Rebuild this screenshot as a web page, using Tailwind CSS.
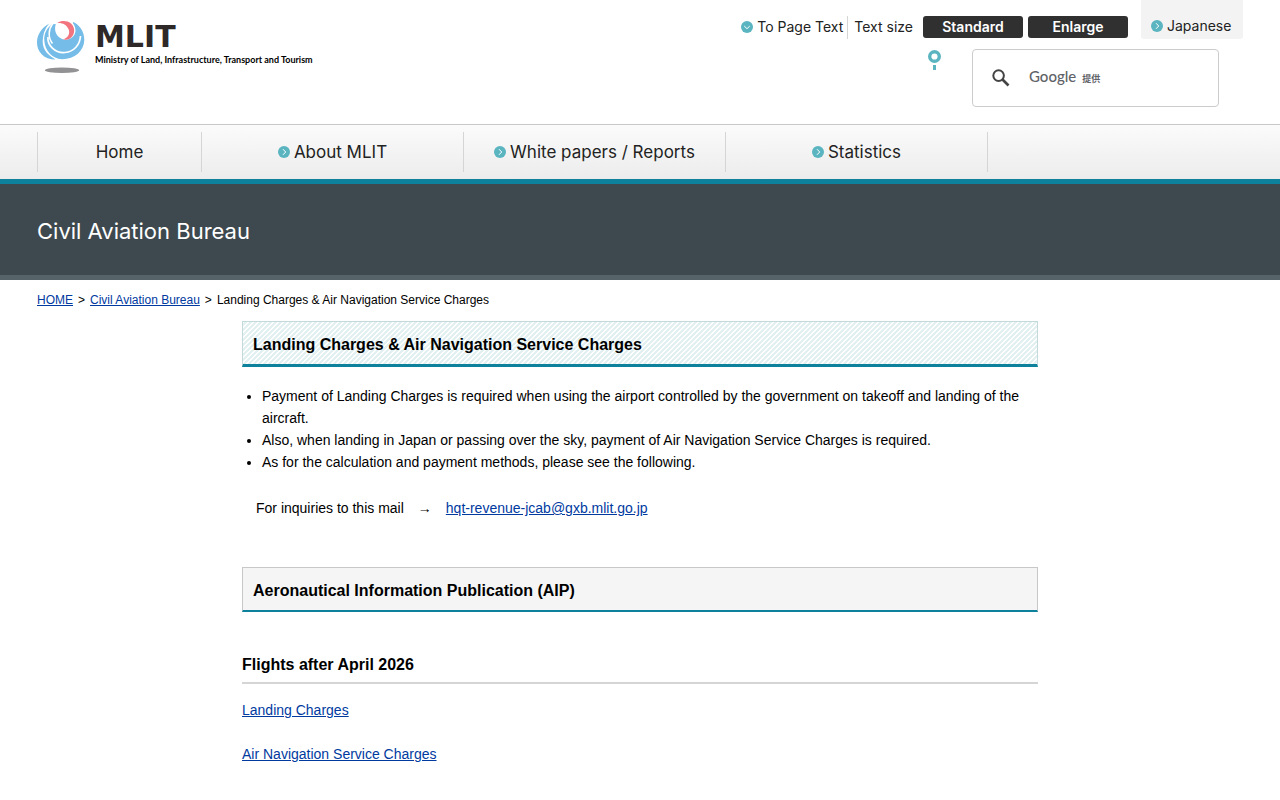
<!DOCTYPE html>
<html lang="en">
<head>
<meta charset="utf-8">
<meta name="viewport" content="width=device-width, initial-scale=1">
<title>Landing Charges &amp; Air Navigation Service Charges</title>
<script src="https://cdn.jsdelivr.net/npm/@tailwindcss/browser@4"></script>
</head>
<body class="bg-white text-black font-['Liberation_Sans','Noto_Sans_CJK_JP',sans-serif] text-sm">
<svg class="hidden" aria-hidden="true">
  <symbol id="chevron" viewBox="0 0 12 12"><circle cx="6" cy="6" r="6" fill="#5bb5c1"/><path d="M5 3.2 7.7 6 5 8.8" fill="none" stroke="#fff" stroke-width="1"/></symbol>
</svg>

<header class="flex justify-between items-start px-[37px] h-[124px]">
  <a href="#" class="flex items-start gap-2.5 pt-5" aria-label="MLIT home">
    <svg class="w-12 h-[54px]" viewBox="0 0 48 54" aria-hidden="true">
      <ellipse cx="25" cy="50.3" rx="17.2" ry="2.8" fill="#929295"/>
      <path d="M12.500 3.500C4 8 0 15 0 22.500 0 32 7 39.500 18.500 39.500 8.500 34 4.500 27 6 17.500 7 11 9 7 12.500 3.500z" fill="#75bde8"/>
      <path d="M14.500 4.500C8.500 9.500 7 15 7.300 20.500 8 31 15 38.500 25 39.300 38 39 47 31 47.300 20 47.400 11 42 4.500 36 2L34 9 18 4z" fill="#75bde8"/>
      <path d="M20 2C16.500 7 17.500 16 25 19 31 21.500 38 17.500 38.500 11 38.500 6 36 2.500 33 .8 28 0 24 0 20 2z" fill="#fff"/>
      <path d="M11 17C10 25 18 33.500 28 32.500 37 31.500 43 25 43.500 16" fill="none" stroke="#fff" stroke-width="1.700"/>
      <path d="M16 3C11 10 11 18 15.500 23.500" fill="none" stroke="#fff" stroke-width="1.500"/>
      <path d="M20.500 3C24 .3 30 .5 34 3.500 39 8 38 16 32 19 30 20 28 20 26 19.300 31 18 33.500 13.500 31.500 9 29.500 4.500 25 2.500 20.500 3z" fill="#f1747e"/>
    </svg>
    <span class="flex flex-col">
      <span class="font-['DejaVu_Sans',sans-serif] font-bold text-[30px] leading-[34px] text-[#2e2928]">MLIT</span>
      <span class="font-['Lato',sans-serif] font-bold text-[9px] leading-3">Ministry of Land, Infrastructure, Transport and Tourism</span>
    </span>
  </a>

  <div class="flex flex-col">
    <div class="flex items-start font-['Inter',sans-serif] text-sm leading-[22px] text-[#222]">
      <a href="#main" class="flex items-center gap-1 mt-4 pr-1"><svg class="size-3 rotate-90"><use href="#chevron"/></svg>To Page Text</a>
      <span class="mt-4 pl-1.5 border-l border-[#d5d5d5] h-[23px] mr-2.5">Text size</span>
      <button type="button" class="mt-4 w-[100px] h-[22px] rounded-[3px] bg-[#303030] text-white font-semibold mr-[5px]">Standard</button>
      <button type="button" class="mt-4 w-[100px] h-[22px] rounded-[3px] bg-[#303030] text-white font-semibold mr-[13px]">Enlarge</button>
      <a href="#" class="w-[102px] h-[39px] pt-[15px] flex items-start gap-1 pl-2.5 rounded-b-[3px] bg-[#f3f3f3]"><svg class="size-3 mt-[5px]"><use href="#chevron"/></svg>Japanese</a>
    </div>
    <form class="flex justify-end items-start pr-6 mt-2.5" role="search" onsubmit="return false">
      <svg class="w-[13px] h-5 mt-px mr-[31px]" viewBox="0 0 13 20" aria-hidden="true"><circle cx="6.500" cy="6.500" r="4.800" fill="none" stroke="#5bb5c1" stroke-width="3.400"/><path d="M5 15h3v5H5z" fill="#5bb5c1"/></svg>
      <label class="relative flex items-center w-[247px] h-[58px] border border-[#ccc] rounded-[4px] pl-[19px]">
        <svg class="w-[18px] h-[18px]" viewBox="0 0 18 18" fill="none" stroke="#444" aria-hidden="true"><circle cx="6.600" cy="6.600" r="5.300" stroke-width="2"/><path d="m10.500 10.500 6 6" stroke-width="2.600"/></svg>
        <span class="ml-[19px] pb-0.5 flex items-baseline gap-1.5 text-[#5f6368] font-medium"><span class="font-['Lato',sans-serif] text-[15px]">Google</span><span class="font-['Noto_Sans_CJK_JP',sans-serif] text-[9px] font-bold">提供</span></span>
        <input type="text" aria-label="Search" class="absolute inset-0 w-full bg-transparent outline-none">
      </label>
    </form>
  </div>
</header>

<nav class="border-t border-[#c8c8c8] border-b-[5px] border-b-[#0e829c] h-[60px] bg-linear-to-b from-[#fbfbfb] to-[#ececec] px-[37px] pt-[7px]">
  <ul class="flex h-10 font-['Inter',sans-serif] text-[17px] text-[#222]">
    <li class="w-[164px] border-l border-[#d5d5d5]"><a href="#" class="flex h-full items-center justify-center">Home</a></li>
    <li class="w-[262px] border-l border-[#d5d5d5]"><a href="#" class="flex h-full items-center justify-center gap-1"><svg class="size-3"><use href="#chevron"/></svg>About MLIT</a></li>
    <li class="w-[262px] border-l border-[#d5d5d5]"><a href="#" class="flex h-full items-center justify-center gap-1"><svg class="size-3"><use href="#chevron"/></svg>White papers / Reports</a></li>
    <li class="w-[263px] border-x border-[#d5d5d5]"><a href="#" class="flex h-full items-center justify-center gap-1"><svg class="size-3"><use href="#chevron"/></svg>Statistics</a></li>
  </ul>
</nav>

<div class="h-24 bg-[#3d494e] border-b-[5px] border-[#566369] px-[37px] pt-0.5 flex items-center">
  <p class="font-['Inter',sans-serif] text-[22px] leading-8 text-white">Civil Aviation Bureau</p>
</div>

<nav aria-label="Breadcrumb" class="px-[37px] pt-3 flex gap-[5px] text-xs leading-4">
  <a href="#" class="text-[#003a9f] underline">HOME</a><span>&gt;</span>
  <a href="#" class="text-[#003a9f] underline">Civil Aviation Bureau</a><span>&gt;</span>
  <span>Landing Charges &amp; Air Navigation Service Charges</span>
</nav>

<main id="main" class="max-w-[796px] mx-auto mt-[13px] leading-[22px]">
  <h1 class="border border-[#c3d9dc] border-b-[3px] border-b-[#0e829c] px-2.5 pt-3 pb-2 text-base leading-[22px] font-bold bg-[linear-gradient(135deg,#fff_12.5%,#e2f0f1_12.5%,#e2f0f1_50%,#fff_50%,#fff_62.5%,#e2f0f1_62.5%)] bg-[length:5px_5px]">Landing Charges &amp; Air Navigation Service Charges</h1>
  <ul class="list-disc pl-5 mt-[18px]">
    <li>Payment of Landing Charges is required when using the airport controlled by the government on takeoff and landing of the aircraft.</li>
    <li>Also, when landing in Japan or passing over the sky, payment of Air Navigation Service Charges is required.</li>
    <li>As for the calculation and payment methods, please see the following.</li>
  </ul>
  <p class="mt-6">　For inquiries to this mail　→　<a href="#" class="text-[#003a9f] underline">hqt-revenue-jcab@gxb.mlit.go.jp</a></p>
  <h2 class="mt-12 border border-[#c8c8c8] border-b-2 border-b-[#0e829c] bg-[#f5f5f5] px-2.5 pt-3 pb-2 text-base leading-[22px] font-bold">Aeronautical Information Publication (AIP)</h2>
  <h3 class="mt-[42px] border-b-2 border-[#d5d5d5] pb-1.5 text-base leading-[22px] font-bold">Flights after April 2026</h3>
  <p class="mt-[15px]"><a href="#" class="text-[#003a9f] underline">Landing Charges</a></p>
  <p class="mt-[22px]"><a href="#" class="text-[#003a9f] underline">Air Navigation Service Charges</a></p>
</main>
</body>
</html>
